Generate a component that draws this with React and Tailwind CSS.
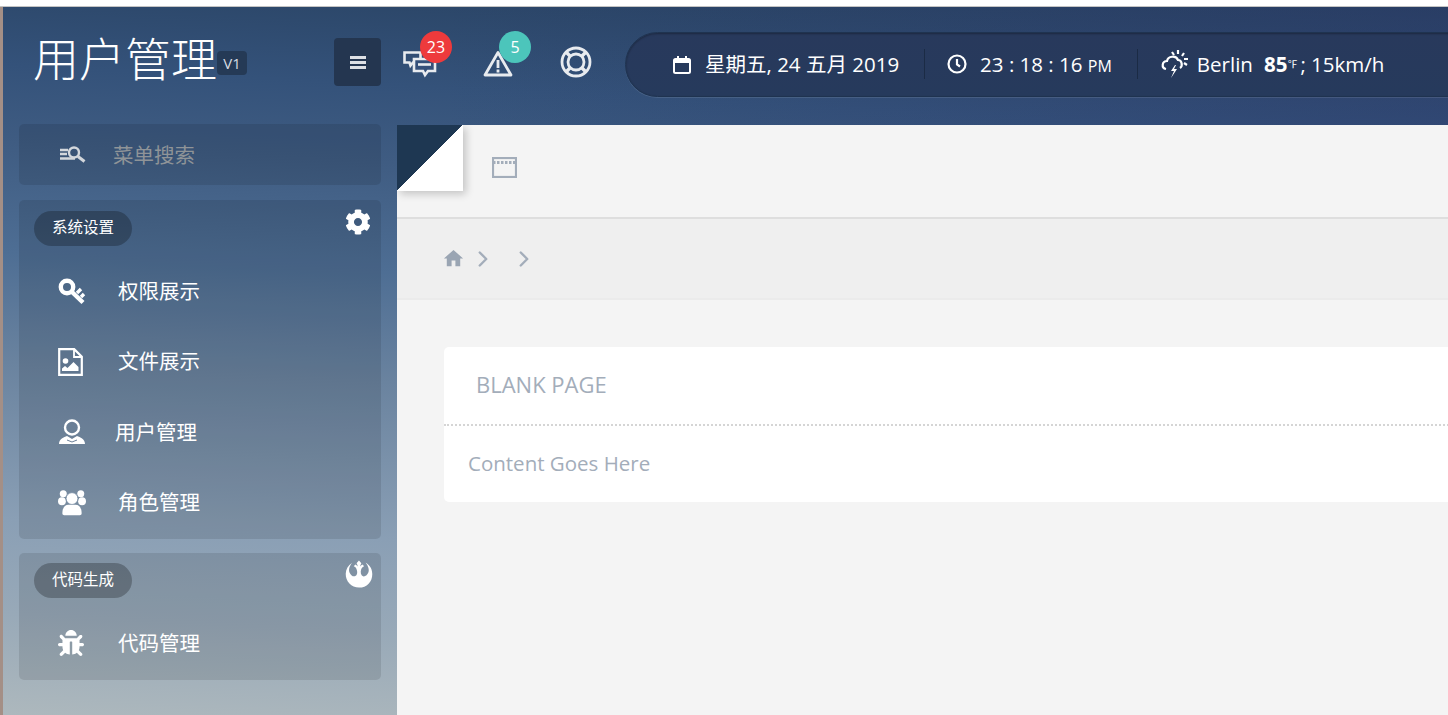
import { FaBug, FaCog, FaRebel } from 'react-icons/fa'
import { MdHome } from 'react-icons/md'
import { ChevronRight } from 'lucide-react'

const font = { fontFamily: '"Open Sans","Noto Sans CJK SC",sans-serif' }

function ChatIcon() {
  return (
    <svg width="34" height="28" viewBox="0 0 34 28" fill="none" stroke="#e8ebef" strokeWidth="2.6">
      <path d="M1.5 2.5h16v10H10l-2.5 3-1-3h-5z" />
      <path d="M11 9h21v12h-7l-3 4-2-4h-9z" fill="#34507a" />
      <path d="M15 14.5h13" />
    </svg>
  )
}

function WarnIcon() {
  return (
    <svg width="30" height="27" viewBox="0 0 30 27" fill="none" stroke="#e8ebef" strokeWidth="2.8">
      <path d="M15 2.5 28 25H2z" strokeLinejoin="round" />
      <path d="M15 10v8M15 19.5v3" />
    </svg>
  )
}

function BuoyIcon() {
  return (
    <svg width="32" height="32" viewBox="0 0 32 32" fill="none" stroke="#e8ebef" strokeWidth="2.8">
      <circle cx="16" cy="16" r="14" />
      <circle cx="16" cy="16" r="8" />
      <path d="m6 6 4.5 4.5M26 6l-4.5 4.5M6 26l4.5-4.5M26 26l-4.5-4.5" strokeWidth="3.4" />
    </svg>
  )
}

function CalendarIcon() {
  return (
    <svg width="18" height="19" viewBox="0 0 18 19" fill="none">
      <rect x="1" y="4" width="16" height="14" rx="1.5" stroke="#fff" strokeWidth="2" />
      <path d="M1 4h16v4H1zM4 1h2v4H4zM12 1h2v4h-2z" fill="#fff" />
    </svg>
  )
}

function ClockIcon() {
  return (
    <svg width="20" height="20" viewBox="0 0 20 20" fill="none" stroke="#fff" strokeWidth="2.2">
      <circle cx="10" cy="10" r="8.5" />
      <path d="M10 5v5.5l3 2" />
    </svg>
  )
}

function WeatherIcon() {
  return (
    <svg width="30" height="30" viewBox="0 0 30 30" fill="none" stroke="#fff" strokeWidth="2.2">
      <path d="M6 20c-5-1-4-8 1-8 1-5 9-6 11-1 4 0 5 6 2 8" />
      <path d="m15 16-4 6h3l-3 7 6-9h-3l2-4z" fill="#fff" stroke="none" />
      <path d="M18 1v4M24 4l-2 3M28 10h-4M27 16l-3-2M12 3l2 3" />
    </svg>
  )
}

function BrowserIcon() {
  return (
    <svg width="25" height="21" viewBox="0 0 25 21" fill="none">
      <rect x="1" y="1" width="23" height="19" stroke="#a3adba" strokeWidth="2.2" />
      <path d="M1 5.5h23" stroke="#a3adba" strokeWidth="3" strokeDasharray="2.5 1.5" />
    </svg>
  )
}

function SearchListIcon() {
  return (
    <svg width="26" height="17" viewBox="0 0 26 17" fill="none" stroke="#d3d7dc" strokeWidth="2.4">
      <path d="M0 4h8M0 8h7M0 12.5h15" />
      <circle cx="14" cy="6.5" r="5" />
      <path d="m18 10.5 6.5 5" strokeWidth="3" />
    </svg>
  )
}

function KeyIcon() {
  return (
    <svg width="28" height="27" viewBox="0 0 28 27" fill="none" stroke="#fff">
      <circle cx="9" cy="9" r="6.2" strokeWidth="4.4" />
      <path d="m13.5 13.5 11.5 11" strokeWidth="4.4" />
      <path d="m19 15 4-4M23 19l3-3" strokeWidth="3.4" />
    </svg>
  )
}

function FileImageIcon() {
  return (
    <svg width="25" height="28" viewBox="0 0 25 28" fill="none">
      <path d="M1.2 1.2h15l7.6 7.6v18H1.2z" stroke="#fff" strokeWidth="2.2" />
      <path d="M16 1.5V9h7.5" stroke="#fff" strokeWidth="1.8" />
      <circle cx="7.5" cy="13" r="2.8" fill="#fff" />
      <path d="M4 23v-2.5l3-2.5 2.5 2 6-6 5 5V23z" fill="#fff" />
    </svg>
  )
}

function UserIcon() {
  return (
    <svg width="28" height="26" viewBox="0 0 28 26" fill="none">
      <circle cx="14" cy="8.5" r="7" stroke="#fff" strokeWidth="2.4" />
      <path d="M1 25c0-5 5-7 8-8l5 3 5-3c3 1 8 3 8 8z" fill="#fff" />
      <path d="m9 21 5 2 5-2" stroke="#6c8098" strokeWidth="1" />
    </svg>
  )
}

function UsersIcon() {
  return (
    <svg width="32" height="29" viewBox="0 0 32 29" fill="#fff">
      <circle cx="6" cy="4.5" r="4" />
      <circle cx="26" cy="4.5" r="4" />
      <ellipse cx="4.5" cy="13" rx="4.5" ry="4.5" />
      <ellipse cx="27.5" cy="13" rx="4.5" ry="4.5" />
      <circle cx="16" cy="10" r="6.8" stroke="#7288a0" strokeWidth="1" />
      <path d="M5 27c0-7 3-10 7-10h8c4 0 7 3 7 10 0 1-1 2-2 2H7c-1 0-2-1-2-2z" />
    </svg>
  )
}

function Badge({ className, children }) {
  return (
    <span className={`absolute flex h-[32px] w-[32px] items-center justify-center rounded-full text-[16px] text-white ${className}`}>
      {children}
    </span>
  )
}

function NavRow({ icon, label, textClass = 'ml-[32px]' }) {
  return (
    <div className="flex h-[70.5px] items-center pl-[39px] text-white">
      <span className="flex w-[28px] items-center justify-start">{icon}</span>
      <span className={`text-[20.5px] text-white ${textClass}`}>{label}</span>
    </div>
  )
}

function NavCard({ title, badgeIcon, topClass = 'pt-[11px]', iconClass = 'top-[9px]', children }) {
  return (
    <div className={`relative rounded-[5px] bg-black/10 pb-[1px] ${topClass}`}>
      <span className="ml-[15px] flex h-[35px] w-[98px] items-center justify-center rounded-full bg-black/25 pb-[1px] text-[15.5px] text-white">
        {title}
      </span>
      <span className={`absolute right-[10px] text-white ${iconClass}`}>{badgeIcon}</span>
      <div className="mt-[10px]">{children}</div>
    </div>
  )
}

export default function App() {
  return (
    <div className="flex h-[715px] w-[1448px] flex-col overflow-hidden" style={font}>
      <div className="h-[7px] shrink-0 border-b border-[#c4c4c4] bg-white" />
      <div className="flex min-h-0 flex-1">
        <div className="w-[3px] shrink-0 bg-[#a48f86]" />
        <div className="flex min-w-0 flex-1 flex-col bg-[linear-gradient(183deg,#27405f_0%,#34527a_17%,#3f5c82_27%,#4e6e94_41%,#6a839f_55%,#8a9fb5_75%,#98a9b8_87%,#adb8bd_100%)]">
          {/* 顶栏 */}
          <header className="flex h-[118px] shrink-0 items-start overflow-hidden bg-[linear-gradient(90deg,transparent_30%,rgba(45,58,110,0.4))]">
            <div className="flex w-[331px] shrink-0 items-start pl-[30px] pt-[21px]">
              <span className="text-[46px] font-light leading-[60px] text-white">用户管理</span>
              <span className="mt-[23px] flex h-[24px] w-[30px] items-center justify-center rounded-[4px] bg-[#253a56] text-[15px] text-[#d8dce2]">
                V1
              </span>
            </div>
            <button className="mt-[31px] flex h-[48px] w-[47px] shrink-0 flex-col items-center justify-center gap-[2px] rounded-[4px] bg-[#243650]">
              <span className="h-[3px] w-[16px] bg-[#dde0e5]" />
              <span className="h-[3px] w-[16px] bg-[#dde0e5]" />
              <span className="h-[3px] w-[16px] bg-[#dde0e5]" />
            </button>
            <div className="relative ml-[22px] mt-[42px] flex h-[30px] w-[34px] shrink-0 items-center">
              <ChatIcon />
              <Badge className="-top-[18px] left-[17px] bg-[#ee3a3c]">23</Badge>
            </div>
            <div className="relative ml-[46px] mt-[41px] flex h-[30px] w-[30px] shrink-0 items-center">
              <WarnIcon />
              <Badge className="-top-[17px] left-[16px] bg-[#4cc5bb]">5</Badge>
            </div>
            <div className="ml-[47px] mt-[39px] shrink-0">
              <BuoyIcon />
            </div>
            <div className="ml-[33px] mt-[25px] flex h-[65px] w-[860px] shrink-0 items-center rounded-l-[33px] border border-[#1f3350] bg-[linear-gradient(180deg,#28395c,#263a5c)] pb-[1px] pl-[47px] text-[20.5px] text-white shadow-[inset_0_1px_2px_rgba(0,0,0,0.3),0_1px_0_rgba(255,255,255,0.1)]">
              <CalendarIcon />
              <span className="ml-[14px]">星期五, 24 五月 2019</span>
              <span className="ml-[25px] h-[30px] w-px bg-[#1b2b45]" />
              <span className="ml-[22px]"><ClockIcon /></span>
              <span className="ml-[13px]">23 : 18 : 16 <span className="text-[16px]">PM</span></span>
              <span className="ml-[25px] h-[30px] w-px bg-[#1b2b45]" />
              <span className="ml-[22px]"><WeatherIcon /></span>
              <span className="ml-[7px]">Berlin</span>
              <span className="ml-[11px] font-bold">85</span>
              <span className="text-[10px]">℉</span>
              <span className="ml-[3px]">; 15km/h</span>
            </div>
          </header>

          <div className="flex min-h-0 flex-1">
            {/* 侧栏 */}
            <aside className="flex w-[394px] shrink-0 flex-col gap-[15px] px-[16px] pt-0">
              <div className="-mt-[1px] flex h-[61px] shrink-0 items-center rounded-[5px] bg-black/10 pl-[41px]">
                <SearchListIcon />
                <input
                  placeholder="菜单搜索"
                  className="ml-[27px] mt-[1px] w-[200px] bg-transparent text-[20.5px] outline-none placeholder:text-[#8f9498]"
                />
              </div>
              <NavCard title="系统设置" badgeIcon={<FaCog size={26} />}>
                <NavRow icon={<KeyIcon />} label="权限展示" />
                <NavRow icon={<FileImageIcon />} label="文件展示" />
                <NavRow icon={<UserIcon />} label="用户管理" textClass="ml-[29px]" />
                <NavRow icon={<UsersIcon />} label="角色管理" />
              </NavCard>
              <div className="-mt-[1px]">
                <NavCard
                  title="代码生成"
                  topClass="pt-[10px]"
                  iconClass="top-[7px]"
                  badgeIcon={<FaRebel size={28} className="-mr-[2px]" />}
                >
                  <NavRow icon={<FaBug size={26} />} label="代码管理" />
                </NavCard>
              </div>
            </aside>

            {/* 内容 */}
            <main className="relative min-w-0 flex-1 overflow-hidden bg-[#f4f4f4]">
              <div className="absolute left-0 top-0 h-[66px] w-[66px] bg-[linear-gradient(135deg,#1e3752_50%,#ffffff_50%)] shadow-[3px_3px_8px_rgba(0,0,0,0.2)]" />
              <div className="flex h-[94px] items-center border-b-2 border-[#dedede] pb-[8px] pl-[95px]">
                <BrowserIcon />
              </div>
              <div className="flex h-[81px] items-center border-b-2 border-[#ebebeb] bg-[#efefef] pl-[47px] text-[#a3adba]">
                <MdHome size={23} className="-ml-[2px] text-[#9aa5b3]" />
                <ChevronRight size={26} strokeWidth={2.2} className="ml-[5px]" />
                <ChevronRight size={26} strokeWidth={2.2} className="ml-[15px]" />
              </div>
              <div className="ml-[47px] mt-[47px] w-[1100px] rounded-[5px] bg-white">
                <div className="flex h-[79px] items-center border-b-2 border-dotted border-[#d5d5d5] pb-[2px] pl-[32px] text-[22px] text-[#a3adba]">
                  BLANK PAGE
                </div>
                <div className="flex h-[76px] items-center pb-[2px] pl-[24px] text-[20.5px] text-[#a3adba]">
                  Content Goes Here
                </div>
              </div>
            </main>
          </div>
        </div>
      </div>
    </div>
  )
}
